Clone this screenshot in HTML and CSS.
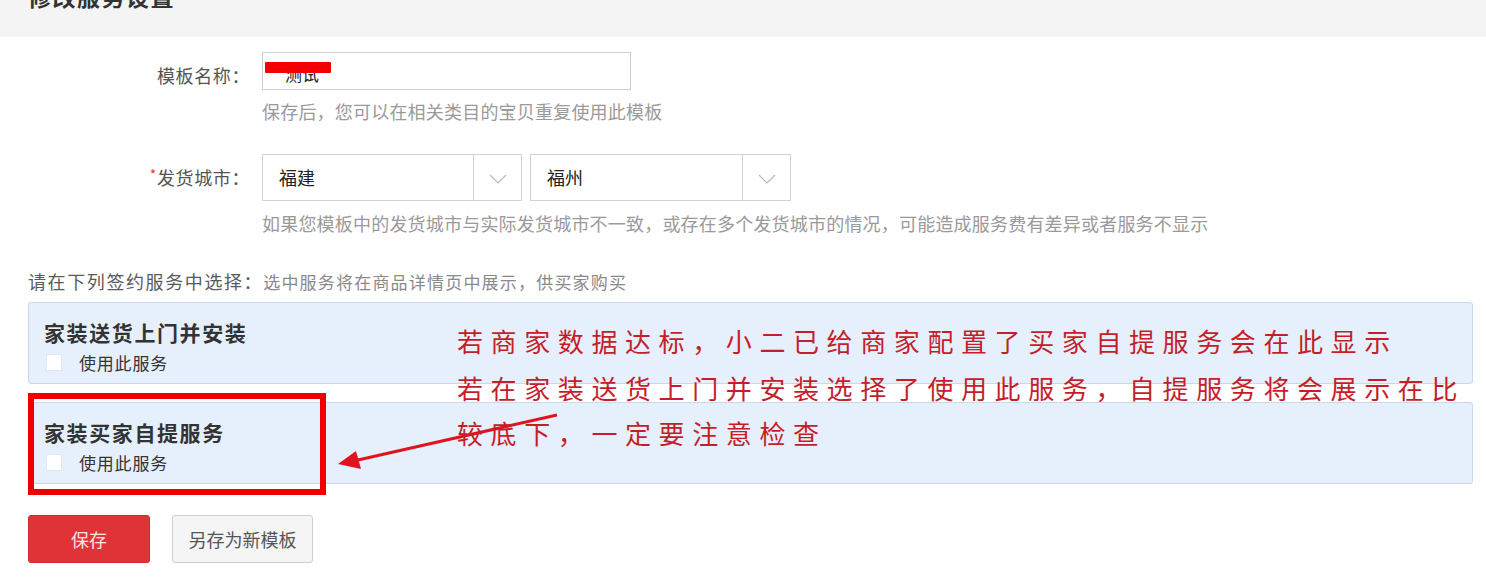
FILE: index.html
```html
<!DOCTYPE html>
<html lang="zh-CN">
<head>
<meta charset="utf-8">
<title>修改服务设置</title>
<link rel="stylesheet" href="styles.css">
</head>
<body>
<div class="page">
  <div class="head"><h2 class="title">修改服务设置</h2></div>

  <div class="form">
    <div class="row row-name">
      <div class="label label-name">模板名称：</div>
      <div class="field">
        <div class="input"><span class="input-text">测试</span><span class="redact"></span></div>
        <p class="hint">保存后，您可以在相关类目的宝贝重复使用此模板</p>
      </div>
    </div>

    <div class="row row-city">
      <div class="label label-city"><span class="req">*</span>发货城市：</div>
      <div class="field">
        <div class="selects">
          <div class="select"><span class="select-value">福建</span><span class="select-arrow"><svg width="18" height="10" viewBox="0 0 18 10"><path d="M1 1 L9 9 L17 1" fill="none" stroke="#b8b8b8" stroke-width="1.2"/></svg></span></div>
          <div class="select"><span class="select-value">福州</span><span class="select-arrow"><svg width="18" height="10" viewBox="0 0 18 10"><path d="M1 1 L9 9 L17 1" fill="none" stroke="#b8b8b8" stroke-width="1.2"/></svg></span></div>
        </div>
        <p class="hint">如果您模板中的发货城市与实际发货城市不一致，或存在多个发货城市的情况，可能造成服务费有差异或者服务不显示</p>
      </div>
    </div>
  </div>

  <div class="services">
    <p class="intro"><span class="intro-strong">请在下列签约服务中选择：</span><span class="intro-sub">选中服务将在商品详情页中展示，供买家购买</span></p>
    <div class="svc">
      <div class="svc-title">家装送货上门并安装</div>
      <label class="svc-check"><span class="box"></span><span class="svc-check-text">使用此服务</span></label>
    </div>
    <div class="svc svc-second">
      <div class="svc-title">家装买家自提服务</div>
      <label class="svc-check"><span class="box"></span><span class="svc-check-text">使用此服务</span></label>
    </div>
  </div>

  <div class="actions">
    <button class="btn btn-primary">保存</button>
    <button class="btn btn-default">另存为新模板</button>
  </div>

  <div class="mark-box"></div>
  <svg class="mark-arrow" width="240" height="70" viewBox="0 0 240 70">
    <line x1="227" y1="4" x2="28" y2="49" stroke="#e0141e" stroke-width="3"/>
    <polygon points="8,53 26,40 31,58" fill="#e0141e"/>
  </svg>
  <div class="note">
    <div class="note-line">若商家数据达标，小二已给商家配置了买家自提服务会在此显示</div>
    <div class="note-line">若在家装送货上门并安装选择了使用此服务，自提服务将会展示在比</div>
    <div class="note-line">较底下，一定要注意检查</div>
  </div>
</div>
</body>
</html>
```

FILE: styles.css
```css
* { box-sizing: border-box; }
html, body { margin: 0; padding: 0; background: #fff; }
body {
  font-family: "Noto Sans CJK SC", "Microsoft YaHei", sans-serif;
  color: #333;
  width: 1486px;
  height: 584px;
  overflow: hidden;
}
.page { position: relative; width: 1486px; height: 584px; }

.head {
  height: 37px;
  background: #f4f4f4;
  overflow: hidden;
  padding-left: 28px;
}
.title {
  margin: -18px 0 0 0;
  font-size: 23px;
  line-height: 28px;
  font-weight: 700;
  color: #333;
  letter-spacing: 1.5px;
}

.form { padding-top: 15px; }
.row { display: flex; align-items: flex-start; }
.row-city { margin-top: 32px; }
.label {
  width: 250px;
  text-align: right;
  font-size: 18px;
  color: #555;
  flex: none;
  letter-spacing: 0.6px;
}
.label-name { line-height: 38px; padding-top: 4px; }
.label-city { line-height: 47px; }
.req { color: #e33; font-size: 14px; vertical-align: top; line-height: 40px; }
.field { margin-left: 12px; }

.input {
  position: relative;
  width: 369px;
  height: 38px;
  border: 1px solid #cfcfcf;
  background: #fff;
  padding-left: 22px;
  font-size: 17px;
  line-height: 36px;
  color: #222;
}
.input-text { display: inline-block; padding-top: 6px; line-height: 30px; }
.redact {
  position: absolute;
  left: 2px;
  top: 9px;
  width: 66px;
  height: 11px;
  background: #f40000;
  border-radius: 1px;
}

.hint {
  margin: 10px 0 0 0;
  font-size: 18px;
  line-height: 22px;
  color: #9a9a9a;
  white-space: nowrap;
  letter-spacing: 0.2px;
}
.row-city .hint { margin-top: 11px; }

.selects { display: flex; gap: 8px; }
.select {
  display: flex;
  width: 260px;
  height: 47px;
  border: 1px solid #d2d2d2;
  background: #fff;
}
.select + .select { width: 261px; }
.select-value {
  flex: 1;
  padding-left: 16px;
  font-size: 18px;
  line-height: 45px;
  color: #222;
}
.select-arrow {
  width: 48px;
  border-left: 1px solid #d2d2d2;
  display: flex;
  align-items: center;
  justify-content: center;
  padding-top: 2px;
}

.services { padding: 0 13px 0 28px; margin-top: 36px; }
.intro { margin: 0; font-size: 18px; line-height: 22px; white-space: nowrap; }
.intro-strong { color: #5a5a5a; font-size: 18px; letter-spacing: 1.6px; }
.intro-sub { color: #8a8a8a; font-size: 17px; letter-spacing: 1.2px; }

.svc {
  margin-top: 9px;
  height: 82px;
  background: #e6f0fc;
  border: 1px solid #c9d8ea;
  border-radius: 3px;
  padding: 16px 16px 0 15px;
}
.svc-second { margin-top: 18px; }
.svc-title {
  font-size: 21px;
  line-height: 26px;
  font-weight: 700;
  color: #333;
  letter-spacing: 1.6px;
}
.svc-check { display: flex; align-items: center; margin-top: 6px; height: 22px; }
.box {
  width: 16px;
  height: 17px;
  background: #fff;
  border: 1px solid #e2e8f0;
  margin-left: 2px;
}
.svc-check-text {
  margin-left: 17px;
  font-size: 17px;
  color: #333;
  letter-spacing: 0.8px;
}

.actions { display: flex; gap: 22px; padding-left: 28px; margin-top: 31px; }
.btn {
  height: 48px;
  font-family: "Noto Sans CJK SC", sans-serif;
  font-size: 18px;
  border-radius: 3px;
  cursor: pointer;
}
.btn-primary {
  width: 122px;
  background: #df3338;
  border: 1px solid #d02a2f;
  color: #fde4e4;
}
.btn-default {
  width: 141px;
  background: #f5f5f5;
  border: 1px solid #cfcfcf;
  color: #555;
}

.mark-box {
  position: absolute;
  left: 28px;
  top: 393px;
  width: 298px;
  height: 102px;
  border: 6px solid #ee0000;
}
.mark-arrow {
  position: absolute;
  left: 330px;
  top: 411px;
}
.note {
  position: absolute;
  left: 457px;
  top: 317px;
  font-size: 26px;
  line-height: 47px;
  color: #c41e2a;
  letter-spacing: 7.6px;
  white-space: nowrap;
  font-weight: 400;
}
.note-line:nth-child(3) { margin-top: -2px; }
```
